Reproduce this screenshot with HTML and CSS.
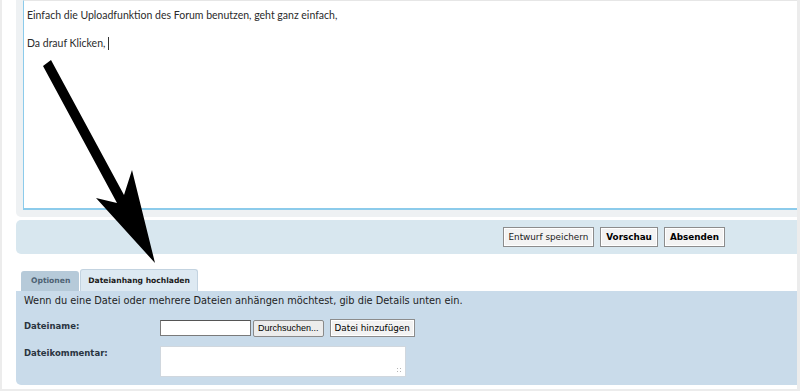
FILE: index.html
```
<!DOCTYPE html>
<html lang="de">

<head>
  <meta charset="UTF-8">
  <title>Antwort erstellen</title>
  <link rel="stylesheet" href="styles.css">
</head>

<body>
  <div class="page">
    <div class="content">
      <div class="editor">
        <div class="editor-text">
          <p>Einfach die Uploadfunktion des Forum benutzen, geht ganz einfach,</p>
          <p class="blank">&nbsp;</p>
          <p>Da drauf Klicken, <span class="caret"></span></p>
        </div>
      </div>

      <div class="toolbar">
        <button class="btn">Entwurf speichern</button>
        <button class="btn strong">Vorschau</button>
        <button class="btn strong">Absenden</button>
      </div>

      <div class="tabs">
        <div class="tab">Optionen</div>
        <div class="tab active">Dateianhang hochladen</div>
      </div>

      <div class="panel">
        <p class="panel-info">Wenn du eine Datei oder mehrere Dateien anhängen möchtest, gib die Details unten ein.</p>
        <div class="field">
          <label>Dateiname:</label>
          <div class="field-controls">
            <input type="text" class="file-input">
            <button class="browse">Durchsuchen...</button>
            <button class="add">Datei hinzufügen</button>
          </div>
        </div>
        <div class="field">
          <label>Dateikommentar:</label>
          <div class="comment"><span class="grip"></span></div>
        </div>
      </div>
    </div>

    <!-- the big pointer arrow drawn over the form -->
    <svg class="arrow" width="800" height="391" viewBox="0 0 800 391">
      <polygon points="43,66 51,60 124,195 132,170 155,263 96,198 117,203" fill="#000" />
    </svg>
  </div>
</body>

</html>
```

FILE: styles.css
```
body {
  margin: 0;
  padding: 0;
  background-color: #fff;
  font-family: "DejaVu Sans", Verdana, sans-serif;
}

.page {
  position: relative;
  width: 795px;
  height: 389px;
  border-left: 2px solid #ececec;
  border-right: 3px solid #ececec;
  border-bottom: 2px solid #ececec;
  overflow: hidden;
}

.content {
  width: 820px;
  margin-left: 14px;
}

.editor {
  background-color: #eef1f3;
  border-radius: 0 0 5px 5px;
  padding: 0 0 7px 7px;
}

.editor-text {
  background-color: #fff;
  border-top: 1px solid #e6e6e6;
  border-left: 1px solid #8ccbeb;
  border-bottom: 2px solid #8ccbeb;
  padding: 7px 3px;
  box-sizing: border-box;
  height: 210px;
  font-family: Lato, sans-serif;
  font-size: 10.5px;
  line-height: 14px;
  color: #2b2b2b;
}

.editor-text p {
  margin: 0;
}

.caret {
  display: inline-block;
  width: 1px;
  height: 13px;
  background-color: #333;
  vertical-align: -3px;
}

.toolbar {
  display: flex;
  justify-content: flex-end;
  gap: 6px;
  margin-top: 3px;
  height: 34px;
  padding: 7px 111px 0 0;
  box-sizing: border-box;
  background-color: #d8e7ef;
  border-radius: 5px;
}

.btn {
  height: 20px;
  padding: 0 5px;
  font-family: "DejaVu Sans", Verdana, sans-serif;
  font-size: 8.8px;
  color: #222;
  background-color: #f3f3f3;
  border: 1px solid #8c8c8c;
  box-shadow: inset 0 0 0 1px #fff;
}

.btn.strong {
  font-weight: bold;
  color: #000;
}

.tabs {
  display: flex;
  gap: 1px;
  margin-top: 15px;
  padding-left: 5px;
  align-items: flex-end;
}

.tab {
  height: 20px;
  line-height: 20px;
  padding: 0 9px 0 10px;
  font-size: 7.6px;
  font-weight: bold;
  color: #4e6274;
  background-color: #b6cad9;
  border-radius: 3px 3px 0 0;
}

.tab.active {
  height: 21px;
  line-height: 21px;
  padding: 0 7px;
  color: #1b1b1b;
  background-color: #dde9f2;
  border: 1px solid #c3d3e0;
  border-bottom: none;
}

.panel {
  height: 94px;
  padding: 4px 8px 0;
  box-sizing: border-box;
  background-color: #c9dbea;
  border-radius: 0 0 0 5px;
}

.panel-info {
  margin: 0 0 13px;
  font-size: 9.8px;
  color: #222;
}

.field {
  display: flex;
  margin-bottom: 9px;
}

.field label {
  width: 136px;
  padding-top: 2px;
  font-size: 8.5px;
  font-weight: bold;
  color: #2a3440;
}

.field-controls {
  display: flex;
  align-items: center;
}

.file-input {
  width: 91px;
  height: 16px;
  padding: 0;
  margin: 0;
  box-sizing: border-box;
  border: 1px solid #7a7a7a;
  border-top-color: #555;
  background-color: #fff;
}

.browse {
  height: 17px;
  margin-left: 2px;
  padding: 0 4px;
  font-family: "Liberation Sans", Arial, sans-serif;
  font-size: 9px;
  background-color: #ececec;
  border: 1px solid #8a8a8a;
  border-radius: 2px;
}

.add {
  height: 18px;
  margin-left: 6px;
  padding: 0 4px;
  font-family: "DejaVu Sans", Verdana, sans-serif;
  font-size: 8.8px;
  background-color: #f2f2f2;
  border: 1px solid #8c8c8c;
  box-shadow: inset 0 0 0 1px #fff;
}

.comment {
  position: relative;
  width: 246px;
  height: 31px;
  box-sizing: border-box;
  background-color: #fff;
  border: 1px solid #d0d7de;
}

.grip {
  position: absolute;
  right: 2px;
  bottom: 2px;
  width: 7px;
  height: 7px;
  background-image: radial-gradient(#b5b5b5 40%, transparent 45%);
  background-size: 3px 3px;
}

.arrow {
  position: absolute;
  left: -2px;
  top: 0;
  pointer-events: none;
}
```
